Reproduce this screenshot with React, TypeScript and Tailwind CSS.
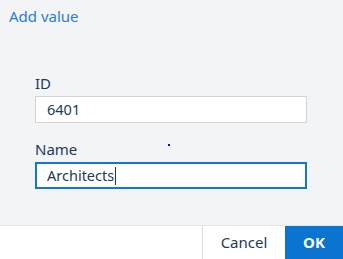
export default function App() {
  return (
    <div
      className="flex h-[259px] w-[343px] flex-col bg-[#f3f4f6] text-[15px] text-[#1d3a5c]"
      style={{ fontFamily: '"Segoe UI", "Noto Sans", sans-serif' }}
    >
      <div className="relative flex-1">
        <div className="pl-[9px] pt-[5px] leading-[22px] text-[#2b7cd3]">Add value</div>

        <div className="flex flex-col px-[35px] pt-[45px]">
          <label className="leading-[22px]">ID</label>
          <div className="mt-[2px] flex h-[27px] w-[272px] items-center border border-[#d2d4d6] bg-white pl-[11px] text-[14.5px]">
            6401
          </div>

          <label className="mt-[15px] leading-[22px]">Name</label>
          <div className="mt-[2px] flex h-[27px] w-[272px] items-center border-2 border-[#1078d2] bg-white pl-[10px] text-[14.5px]">
            <span>Architects</span>
            <span className="ml-[1px] h-[18px] w-px bg-[#1d3a5c]" />
          </div>
        </div>

        <span className="absolute left-[168px] top-[144px] h-[2px] w-[2px] bg-[#0000ff]" />
      </div>

      <div className="flex h-[34px] border-t border-[#e3e4e6] bg-white">
        <div className="flex-1" />
        <div className="w-px bg-[#dcdcdc]" />
        <button type="button" className="w-[82px] text-[#1d3a5c]">
          Cancel
        </button>
        <button type="button" className="w-[58px] bg-[#0b74d1] font-bold text-white">
          OK
        </button>
      </div>
    </div>
  );
}
